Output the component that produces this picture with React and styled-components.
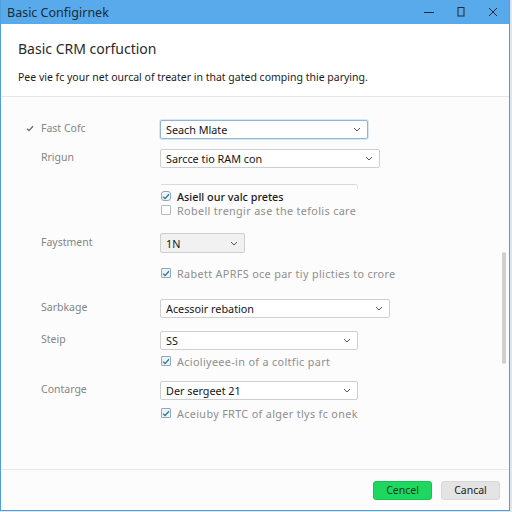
import React from "react";
import styled, { createGlobalStyle } from "styled-components";

const Global = createGlobalStyle`
  html, body { margin: 0; padding: 0; }
  body {
    width: 512px;
    height: 512px;
    overflow: hidden;
    background: #dfe6ee;
    font-family: "Noto Sans", "Open Sans", sans-serif;
  }
`;

const Window = styled.div`
  width: 510px;
  height: 511px;
  display: flex;
  flex-direction: column;
  background: #fcfcfc;
  border: 1px solid #4f9fe0;
  border-top: none;
  box-sizing: border-box;
  position: relative;
`;

const TitleBar = styled.div`
  height: 24px;
  background: #58aaea;
  display: flex;
  align-items: center;
  padding-left: 6px;
  color: #1b2a3a;
  font-size: 12.5px;
`;

const TitleText = styled.div`
  flex: 1;
`;

const Controls = styled.div`
  display: flex;
  align-items: center;
  height: 100%;
`;

const CtrlBtn = styled.div`
  width: 32px;
  height: 100%;
  display: flex;
  align-items: center;
  justify-content: center;
`;

const Header = styled.div`
  background: #ffffff;
  padding: 15px 17px 0;
  height: 73px;
  box-sizing: border-box;
  border-bottom: 1px solid #e6e6e6;
`;

const Heading = styled.div`
  font-size: 14px;
  color: #2a2a2a;
  line-height: 20px;
`;

const Sub = styled.div`
  margin-top: 11px;
  font-size: 10.5px;
  color: #1c1c1c;
  line-height: 14px;
`;

const Body = styled.div`
  flex: 1;
  padding-top: 23px;
  display: flex;
  flex-direction: column;
  position: relative;
`;

const Row = styled.div`
  display: grid;
  grid-template-columns: 159px 1fr;
  align-items: center;
  margin-top: ${(p) => p.$mt || 0}px;
`;

const Label = styled.div`
  padding-left: ${(p) => (p.$check ? 25 : 40)}px;
  padding-bottom: 3px;
  font-size: 10.5px;
  color: #858585;
  display: flex;
  align-items: center;
  gap: 7px;
`;

const Select = styled.div`
  width: ${(p) => p.$w}px;
  height: ${(p) => p.$h || 19}px;
  box-sizing: border-box;
  border: 1px solid ${(p) => (p.$focus ? "#8fb6d3" : "#cfcfcf")};
  box-shadow: ${(p) => (p.$focus ? "0 0 0 1px #d6e6f2" : "none")};
  border-radius: 2px;
  background: ${(p) => (p.$gray ? "#f1f1f1" : "#ffffff")};
  display: flex;
  align-items: center;
  padding: 0 6px 0 5px;
  font-size: 10.8px;
  color: #151515;
`;

const SelectText = styled.div`
  flex: 1;
  white-space: nowrap;
`;

const Rule = styled.div`
  margin-left: 160px;
  margin-top: ${(p) => p.$mt}px;
  width: 197px;
  height: 5px;
  border-top: 1px solid #d9d9d9;
  border-right: 1px solid #e4e4e4;
  border-top-right-radius: 3px;
  box-sizing: border-box;
`;

const CheckRow = styled.div`
  margin-left: 160px;
  margin-top: ${(p) => p.$mt || 0}px;
  display: flex;
  align-items: center;
  gap: 6px;
  height: 14px;
  font-size: 10.8px;
  letter-spacing: ${(p) => (p.$strong ? 0 : 0.35)}px;
  color: ${(p) => (p.$strong ? "#1a1a1a" : "#8e8e8e")};
  font-weight: ${(p) => (p.$strong ? 500 : 400)};
  white-space: nowrap;
`;

const Box = styled.div`
  width: 10px;
  height: 10px;
  box-sizing: border-box;
  border: 1px solid ${(p) => (p.$on ? "#8fa9bd" : "#b9b9b9")};
  border-radius: ${(p) => (p.$round ? 3 : 1)}px;
  background: ${(p) => (p.$on ? "#eef4f8" : "#fff")};
  display: flex;
  align-items: center;
  justify-content: center;
`;

const Scrollbar = styled.div`
  position: absolute;
  right: 3px;
  top: 155px;
  width: 4px;
  height: 112px;
  background: #cfcfcf;
  border-radius: 2px;
`;

const Footer = styled.div`
  height: 40px;
  border-top: 1px solid #e8e8e8;
  background: #fcfcfc;
  display: flex;
  justify-content: flex-end;
  align-items: center;
  gap: 9px;
  padding: 0 9px 0 0;
`;

const Button = styled.div`
  width: 59px;
  height: 19px;
  box-sizing: border-box;
  border-radius: 3px;
  display: flex;
  align-items: center;
  justify-content: center;
  font-size: 10.5px;
  background: ${(p) => (p.$primary ? "#1ed760" : "#e4e4e4")};
  border: 1px solid ${(p) => (p.$primary ? "#12c452" : "#d8d8d8")};
  color: ${(p) => (p.$primary ? "#0d3d1e" : "#222")};
`;

const Chevron = () => (
  <svg width="8" height="5" viewBox="0 0 8 5">
    <path d="M1 1 L4 4 L7 1" fill="none" stroke="#555" strokeWidth="1" />
  </svg>
);

const Tick = ({ color = "#2b6f95" }) => (
  <svg width="8" height="7" viewBox="0 0 8 7">
    <path d="M1 3.6 L3 5.6 L7 1.2" fill="none" stroke={color} strokeWidth="1.3" />
  </svg>
);

const Field = ({ label, value, w, mt, h, focus, gray, check }) => (
  <Row $mt={mt}>
    <Label $check={check}>
      {check && <Tick color="#666" />}
      {label}
    </Label>
    <Select $w={w} $h={h} $focus={focus} $gray={gray}>
      <SelectText>{value}</SelectText>
      <Chevron />
    </Select>
  </Row>
);

const Check = ({ on, round, strong, mt, children }) => (
  <CheckRow $mt={mt} $strong={strong}>
    <Box $on={on} $round={round}>
      {on && <Tick />}
    </Box>
    {children}
  </CheckRow>
);

export default function App() {
  return (
    <>
      <Global />
      <Window>
        <TitleBar>
          <TitleText>Basic Configirnek</TitleText>
          <Controls>
            <CtrlBtn>
              <svg width="10" height="10" viewBox="0 0 10 10">
                <path d="M0 5.5 H10" stroke="#1b2a3a" strokeWidth="1" />
              </svg>
            </CtrlBtn>
            <CtrlBtn>
              <svg width="10" height="10" viewBox="0 0 10 10">
                <rect x="2" y="0.5" width="6" height="8.5" fill="none" stroke="#1b2a3a" strokeWidth="1" />
              </svg>
            </CtrlBtn>
            <CtrlBtn>
              <svg width="10" height="10" viewBox="0 0 10 10">
                <path d="M1 1 L9 9 M9 1 L1 9" stroke="#1b2a3a" strokeWidth="1" />
              </svg>
            </CtrlBtn>
          </Controls>
        </TitleBar>
        <Header>
          <Heading>Basic CRM corfuction</Heading>
          <Sub>Pee vie fc your net ourcal of treater in that gated comping thie parying.</Sub>
        </Header>
        <Body>
          <Field check label="Fast Cofc" value="Seach Mlate" w={208} focus />
          <Field label="Rrigun" value="Sarcce tio RAM con" w={220} mt={10} />
          <Rule $mt={16} />
          <Check on round strong mt={0}>Asiell our valc pretes</Check>
          <Check>Robell trengir ase the tefolis care</Check>
          <Field label="Faystment" value="1N" w={85} h={20} gray mt={16} />
          <Check on mt={13}>Rabett APRFS oce par tiy plicties to crore</Check>
          <Field label="Sarbkage" value="Acessoir rebation" w={230} mt={19} />
          <Field label="Steip" value="SS" w={198} mt={13} />
          <Check on mt={4}>Acioliyeee-in of a coltfic part</Check>
          <Field label="Contarge" value="Der sergeet 21" w={198} mt={13} />
          <Check on mt={6}>Aceiuby FRTC of alger tlys fc onek</Check>
          <Scrollbar />
        </Body>
        <Footer>
          <Button $primary>Cencel</Button>
          <Button>Cancal</Button>
        </Footer>
      </Window>
    </>
  );
}
